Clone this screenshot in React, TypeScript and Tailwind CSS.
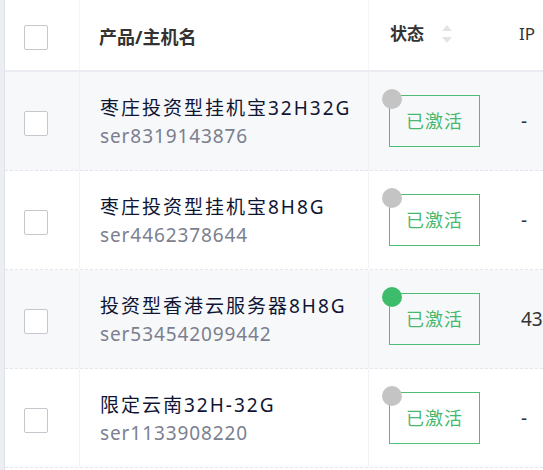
import React from 'react'

type Row = {
  name: string
  id: string
  online: boolean
  ip: string
  shaded: boolean
}

const rows: Row[] = [
  {name: '枣庄投资型挂机宝32H32G', id: 'ser8319143876', online: false, ip: '-', shaded: true},
  {name: '枣庄投资型挂机宝8H8G', id: 'ser4462378644', online: false, ip: '-', shaded: false},
  {name: '投资型香港云服务器8H8G', id: 'ser534542099442', online: true, ip: '43', shaded: true},
  {name: '限定云南32H-32G', id: 'ser1133908220', online: false, ip: '-', shaded: false},
]

const font = {fontFamily: '"Noto Sans", "Noto Sans CJK SC", sans-serif'}

function Checkbox() {
  return <span className="block h-[25px] w-[24px] rounded-[2px] border border-[#c5c7cd] bg-white" />
}

function SortArrows() {
  return (
    <svg width="12" height="22" viewBox="0 0 12 22" className="ml-[17px]">
      <path d="M6 2 L11 8 L1 8 Z" fill="#e3e4e8" />
      <path d="M6 20 L11 14 L1 14 Z" fill="#e3e4e8" />
    </svg>
  )
}

function Status({online}: {online: boolean}) {
  return (
    <div className="relative pl-[7px] pt-[6px]">
      <span
        className={`absolute left-0 top-0 h-[20px] w-[20px] rounded-full ${online ? 'bg-[#3dbd6b]' : 'bg-[#c4c4c4]'}`}
      />
      <div className="flex h-[52px] w-[91px] items-center justify-center border border-[#4fbd74] text-[18px] tracking-[1px] text-[#47b96e]">
        已激活
      </div>
    </div>
  )
}

export default function App() {
  return (
    <div className="flex h-[470px] w-[543px] overflow-hidden bg-white" style={font}>
      <div className="w-[5px] shrink-0 border-r border-[#dfe2ea] bg-[#eceef3]" />
      <div className="flex min-w-0 flex-1 flex-col">
        {/* header */}
        <div className="flex h-[72px] shrink-0 border-b-2 border-[#eaecf1]">
          <div className="flex w-[75px] shrink-0 items-center border-r border-[#f3f4f6] pl-[19px] pt-[5px]">
            <Checkbox />
          </div>
          <div className="flex w-[289px] shrink-0 items-center border-r border-[#f3f4f6] pl-[19px] pt-[5px] text-[18px] font-bold text-[#333]">
            产品/主机名
          </div>
          <div className="flex w-[131px] shrink-0 items-center pb-[2px] pl-[21px] text-[17px] font-bold text-[#333]">
            状态
            <SortArrows />
          </div>
          <div className="flex flex-1 items-center pb-[2px] pl-[19px] text-[17px] text-[#333]">IP</div>
        </div>
        {rows.map((r) => (
          <div
            key={r.id}
            className={`flex h-[99px] shrink-0 border-b border-dashed border-[#e4e6ec] ${r.shaded ? 'bg-[#f7f8fa]' : 'bg-white'}`}
          >
            <div className="flex w-[75px] shrink-0 items-center border-r border-[#f1f2f5] pl-[19px] pt-[4px]">
              <Checkbox />
            </div>
            <div className="flex w-[289px] shrink-0 flex-col justify-center border-r border-[#f1f2f5] pl-[20px] pt-[2px]">
              <div className="text-[19px] leading-[28px] tracking-[2px] text-[#0f1535]">{r.name}</div>
              <div className="text-[19px] leading-[28px] tracking-[0.9px] text-[#7b7f8f]">{r.id}</div>
            </div>
            <div className="flex w-[131px] shrink-0 items-center pb-[6px] pl-[13px]">
              <Status online={r.online} />
            </div>
            <div className="flex flex-1 items-center pl-[21px] text-[19px] text-[#333]">{r.ip}</div>
          </div>
        ))}
      </div>
    </div>
  )
}
